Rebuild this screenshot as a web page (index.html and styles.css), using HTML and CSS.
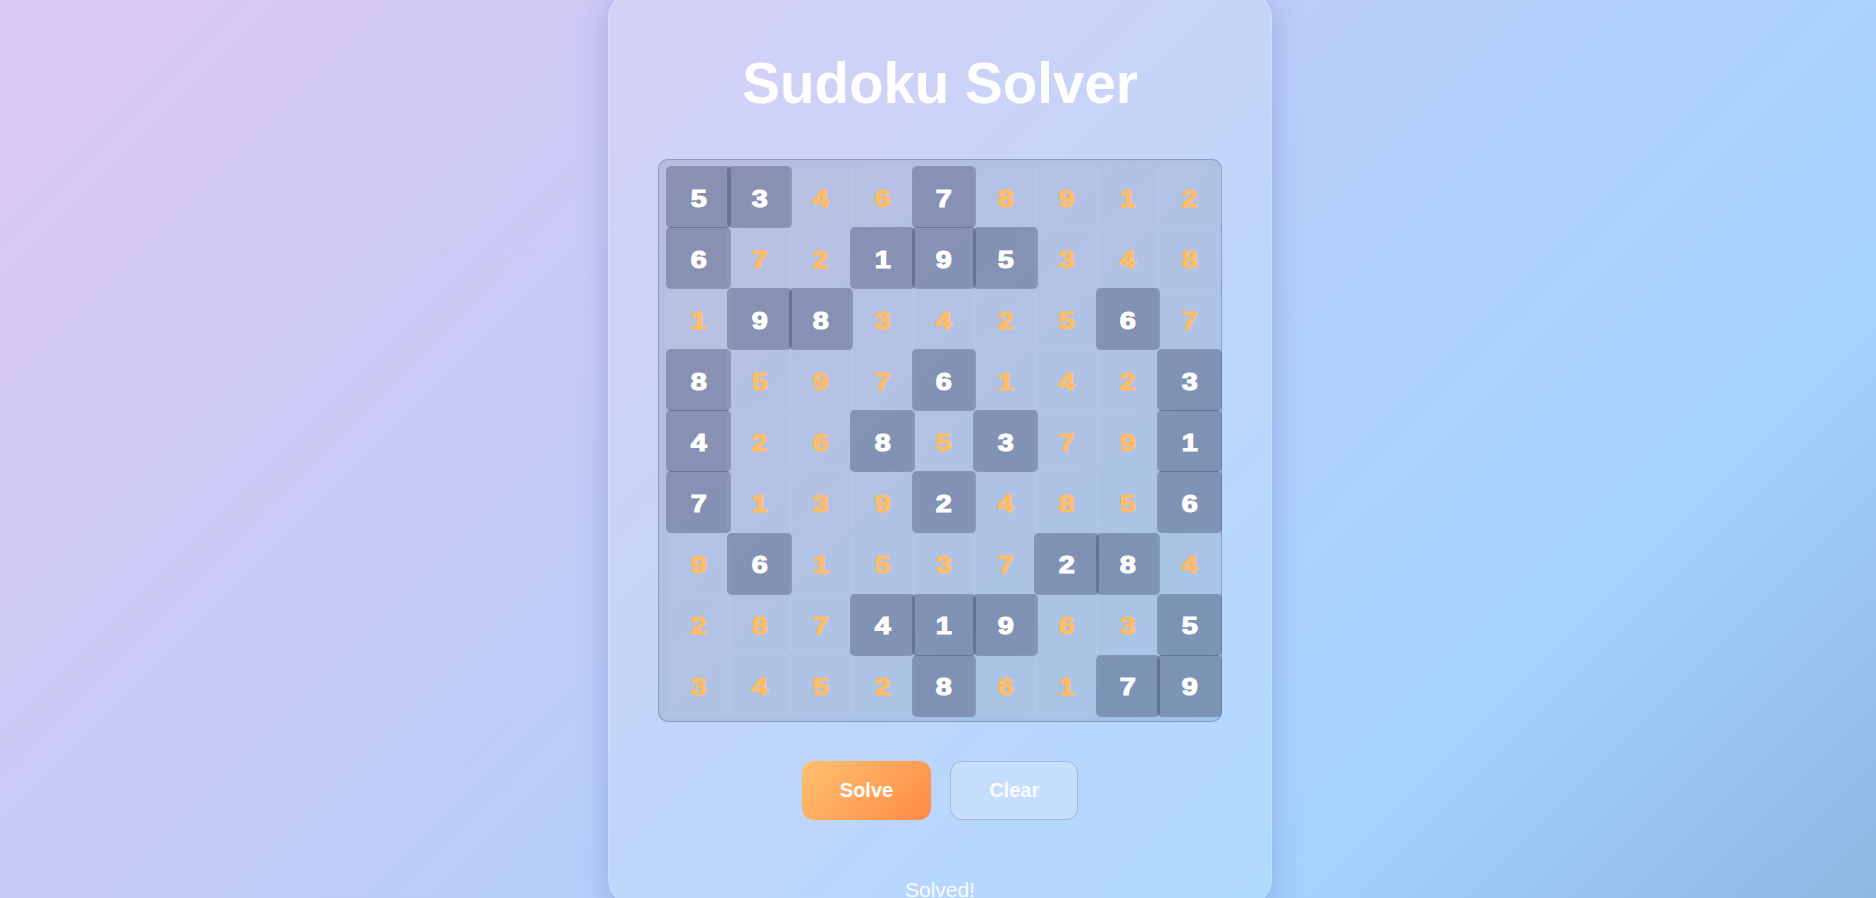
FILE: index.html
```html
<!DOCTYPE html>
<html lang="en">
<head>
<meta charset="utf-8">
<title>Sudoku Solver</title>
<link rel="stylesheet" href="styles.css">
</head>
<body>
<main class="card">
  <h1 class="title">Sudoku Solver</h1>
  <div class="board">
    <div class="cell given"><span>5</span></div><div class="cell given"><span>3</span></div><div class="cell"><span>4</span></div><div class="cell"><span>6</span></div><div class="cell given"><span>7</span></div><div class="cell"><span>8</span></div><div class="cell"><span>9</span></div><div class="cell"><span>1</span></div><div class="cell"><span>2</span></div>
    <div class="cell given"><span>6</span></div><div class="cell"><span>7</span></div><div class="cell"><span>2</span></div><div class="cell given"><span>1</span></div><div class="cell given"><span>9</span></div><div class="cell given"><span>5</span></div><div class="cell"><span>3</span></div><div class="cell"><span>4</span></div><div class="cell"><span>8</span></div>
    <div class="cell"><span>1</span></div><div class="cell given"><span>9</span></div><div class="cell given"><span>8</span></div><div class="cell"><span>3</span></div><div class="cell"><span>4</span></div><div class="cell"><span>2</span></div><div class="cell"><span>5</span></div><div class="cell given"><span>6</span></div><div class="cell"><span>7</span></div>
    <div class="cell given"><span>8</span></div><div class="cell"><span>5</span></div><div class="cell"><span>9</span></div><div class="cell"><span>7</span></div><div class="cell given"><span>6</span></div><div class="cell"><span>1</span></div><div class="cell"><span>4</span></div><div class="cell"><span>2</span></div><div class="cell given"><span>3</span></div>
    <div class="cell given"><span>4</span></div><div class="cell"><span>2</span></div><div class="cell"><span>6</span></div><div class="cell given"><span>8</span></div><div class="cell"><span>5</span></div><div class="cell given"><span>3</span></div><div class="cell"><span>7</span></div><div class="cell"><span>9</span></div><div class="cell given"><span>1</span></div>
    <div class="cell given"><span>7</span></div><div class="cell"><span>1</span></div><div class="cell"><span>3</span></div><div class="cell"><span>9</span></div><div class="cell given"><span>2</span></div><div class="cell"><span>4</span></div><div class="cell"><span>8</span></div><div class="cell"><span>5</span></div><div class="cell given"><span>6</span></div>
    <div class="cell"><span>9</span></div><div class="cell given"><span>6</span></div><div class="cell"><span>1</span></div><div class="cell"><span>5</span></div><div class="cell"><span>3</span></div><div class="cell"><span>7</span></div><div class="cell given"><span>2</span></div><div class="cell given"><span>8</span></div><div class="cell"><span>4</span></div>
    <div class="cell"><span>2</span></div><div class="cell"><span>8</span></div><div class="cell"><span>7</span></div><div class="cell given"><span>4</span></div><div class="cell given"><span>1</span></div><div class="cell given"><span>9</span></div><div class="cell"><span>6</span></div><div class="cell"><span>3</span></div><div class="cell given"><span>5</span></div>
    <div class="cell"><span>3</span></div><div class="cell"><span>4</span></div><div class="cell"><span>5</span></div><div class="cell"><span>2</span></div><div class="cell given"><span>8</span></div><div class="cell"><span>6</span></div><div class="cell"><span>1</span></div><div class="cell given"><span>7</span></div><div class="cell given"><span>9</span></div>
  </div>
  <div class="actions">
    <button class="btn btn-solve" type="button">Solve</button>
    <button class="btn btn-clear" type="button">Clear</button>
  </div>
  <p class="status">Solved!</p>
</main>
</body>
</html>
```

FILE: styles.css
```css
* {
  box-sizing: border-box;
}

html, body {
  margin: 0;
  height: 100%;
}

body {
  min-height: 100vh;
  display: flex;
  justify-content: center;
  align-items: center;
  overflow: hidden;
  padding-left: 4px;
  font-family: "Liberation Sans", Arial, sans-serif;
  background: linear-gradient(135deg, #dcc8f4 0%, #c6cbf6 35%, #b2cffb 58%, #a3d3fe 78%, #8cb8e2 100%);
}

.card {
  flex: none;
  width: 664px;
  padding: 60px 50px 4px;
  border-radius: 28px;
  background: rgba(255, 255, 255, 0.14);
  border: 1px solid rgba(255, 255, 255, 0.18);
  box-shadow: 0 8px 32px rgba(40, 50, 140, 0.22);
  display: flex;
  flex-direction: column;
  align-items: center;
}

.title {
  margin: 0 0 43px;
  font-size: 56.5px;
  line-height: 64px;
  font-weight: 700;
  color: #ffffff;
  text-align: center;
}

.board {
  width: 564px;
  height: 563px;
  display: grid;
  grid-template-columns: repeat(9, 61.4px);
  grid-template-rows: repeat(9, 61.1px);
  padding: 6px 2px 5px 7px;
  border: 1px solid rgba(70, 85, 125, 0.35);
  border-radius: 10px;
  background: rgba(90, 108, 140, 0.2);
}

.cell {
  width: 64.7px;
  height: 62px;
  border-radius: 5px;
  background: rgba(255, 255, 255, 0.05);
  display: flex;
  justify-content: center;
  align-items: center;
  color: #ffbd69;
}

.cell.given {
  background: rgba(50, 60, 92, 0.34);
  color: #ffffff;
}

.cell span {
  display: inline-block;
  font-family: "Liberation Sans", Arial, sans-serif;
  font-weight: 700;
  font-size: 24px;
  line-height: 1;
  padding-top: 3px;
  -webkit-text-stroke: 1.1px currentColor;
  transform: scaleX(1.2);
}

.actions {
  margin-top: 39px;
  display: flex;
  gap: 19px;
}

.btn {
  font-family: "Liberation Sans", Arial, sans-serif;
  font-size: 20px;
  font-weight: 700;
  line-height: 23px;
  padding: 18px 38px;
  border-radius: 12px;
  color: #ffffff;
}

.btn-solve {
  border: none;
  background: linear-gradient(135deg, #ffc170 0%, #ff8a44 100%);
}

.btn-clear {
  padding: 17px 38px;
  border: 1px solid rgba(80, 100, 145, 0.3);
  background: rgba(255, 255, 255, 0.2);
  color: rgba(255, 255, 255, 0.92);
}

.status {
  margin: 58px 0 0;
  font-size: 21px;
  line-height: 24px;
  color: rgba(255, 255, 255, 0.95);
}
```
